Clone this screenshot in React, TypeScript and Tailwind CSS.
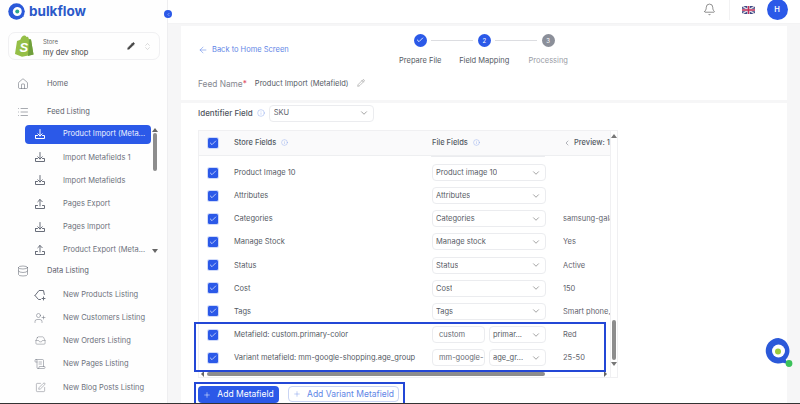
import React from "react";
import { ArrowLeft, Bell, Check, ChevronDown, ChevronLeft, Database, House, Info, List, Pencil, Plus, ScrollText, SquarePen, UserPlus, Inbox, ChevronsUpDown, type LucideIcon } from "lucide-react";

function Logo() {
  return (
    <svg width="17" height="17" viewBox="0 0 34 34">
      <circle cx="17" cy="17" r="16.500" fill="#2b59d9" />
      <path d="M20 8.500a9 9 0 0 1 6 10c-.5 3-2 5-4.500 6.500l11 2.500-3-3 3.500-8-5-9z" fill="#2b59d9" />
      <path d="M19.500 8a9.500 9.500 0 0 0-10 9 9 9 0 0 0 9.500 9c3 0 5-1.500 6.500-3.500 1.500-2 2-4 2-6A9 9 0 0 0 19.500 8z" fill="#fff" />
      <circle cx="18.500" cy="17" r="4" fill="#2aa58c" />
    </svg>
  );
}

function Shopify() {
  return (
    <svg width="20" height="22" viewBox="0 0 20 22">
      <path d="M1 19 3 6c2-.8 3-1 3.500-1.500C7 2.800 8.500.6 10.500.6c.8 0 1.500.6 2 1.400l1.500-.2 1 2.400 2 .3L19.500 19.500 8 21.800z" fill="#95bf47" />
      <path d="M15 4.200l2 .3L19.500 19.500 14 21z" fill="#6f9f3c" />
      <text x="5.500" y="17" fontFamily="'Liberation Sans',sans-serif" fontSize="13" fontWeight="700" fontStyle="italic" fill="#fff">S</text>
    </svg>
  );
}

function TrayArrow({ up = false }: { up?: boolean }) {
  return (
    <svg width="12" height="12" viewBox="0 0 12 12" fill="none" stroke="currentColor" strokeWidth="1" strokeLinecap="round" strokeLinejoin="round">
      <path d="M1.500 7.500v3h9v-3H8.500M3.500 7.500h-2" />
      {up ? <path d="M6 8V1.500M3.800 3.700 6 1.500l2.200 2.200" /> : <path d="M6 1.500V8M3.800 5.800 6 8l2.200-2.200" />}
    </svg>
  );
}

function ProductIcon() {
  return (
    <svg width="12" height="12" viewBox="0 0 12 12" fill="none" stroke="currentColor" strokeWidth="1" strokeLinecap="round" strokeLinejoin="round">
      <path d="M1 6.500 5 1.500h4.500l.8 4M6.500 10.500H4.500L1 6.500" />
      <path d="M9.500 8v3M8 9.500h3" />
    </svg>
  );
}

function Flag() {
  return (
    <svg width="13" height="8" viewBox="0 0 13 8">
      <rect width="13" height="8" fill="#3b4a86" />
      <path d="M0 0 13 8M13 0 0 8" stroke="#e6dfe6" strokeWidth="1.400" />
      <path d="M6.500 0v8M0 4h13" stroke="#e6dfe6" strokeWidth="2.600" />
      <path d="M6.500 0v8M0 4h13" stroke="#c2305a" strokeWidth="1.400" />
    </svg>
  );
}

function SideHead({ Icon, label, h }: { Icon: LucideIcon; label: string; h: string }) {
  return (
    <div className={`flex items-center pl-[17px] shrink-0 ${h}`}>
      <Icon size={12} strokeWidth={1.100} className="text-[#5f6470] w-[12px] shrink-0" />
      <span className="ml-[18px] text-[7.500px] text-[#5c616c]">{label}</span>
    </div>
  );
}

function SubItem({ icon, label, active = false }: { icon: React.ReactNode; label: string; active?: boolean }) {
  return (
    <div className={`flex items-center h-[19px] w-[126px] shrink-0 pl-[9px] rounded-[4px] mb-[4.200px] ${active ? "bg-[#2b59e8] text-white" : "text-[#696e7a]"}`}>
      <span className="w-[12px] shrink-0 flex justify-center">{icon}</span>
      <span className={`ml-[17px] text-[7.500px] whitespace-nowrap ${active ? "text-[#eef2ff]" : "text-[#6d717c]"}`}>{label}</span>
    </div>
  );
}

function Select({ label, cls }: { label: string; cls: string }) {
  return (
    <div className={`h-[17px] rounded-[4px] border border-[#ebecef] bg-white flex items-center justify-between pl-[3px] pr-[4px] shrink-0 overflow-hidden ${cls}`}>
      <span className="text-[7.500px] text-[#585c66] whitespace-nowrap overflow-hidden">{label}</span>
      <ChevronDown size={10} strokeWidth={1.300} className="text-[#555] shrink-0" />
    </div>
  );
}

function Box() {
  return (
    <span className="w-[10px] h-[10px] rounded-[1.500px] bg-[#2b59e8] flex items-center justify-center shrink-0 ring-1 ring-[#cfdafa]">
      <Check size={8} strokeWidth={2} className="text-white" />
    </span>
  );
}

function Row({ name, file, value = "", custom }: { name: string; file?: string; value?: string; custom?: [string, string] }) {
  return (
    <div className="flex items-center h-[23.150px] pl-[9px] whitespace-nowrap">
      <Box />
      <span className="ml-[16px] w-[198px] shrink-0 text-[7.500px] text-[#555a64]">{name}</span>
      {custom ? (
        <div className="flex gap-[4px] w-[114px] shrink-0">
          <div className="h-[17px] w-[53px] rounded-[4px] border border-[#ebecef] flex items-center pl-[6px] overflow-hidden">
            <span className="text-[7.500px] text-[#666a74] whitespace-nowrap">{custom[0]}</span>
          </div>
          <Select label={custom[1]} cls="w-[57px]" />
        </div>
      ) : (
        <Select label={file ?? ""} cls="w-[114px]" />
      )}
      <span className="ml-[17px] w-[47px] overflow-hidden text-[7.500px] text-[#5f636d] whitespace-nowrap">{value}</span>
    </div>
  );
}

function Step({ label, node, cls }: { label: string; node: React.ReactNode; cls: string }) {
  return (
    <div className="flex flex-col items-center w-[64px]">
      {node}
      <span className={`mt-[8px] text-[7.500px] whitespace-nowrap ${cls}`}>{label}</span>
    </div>
  );
}

function Circle({ bg, children }: { bg: string; children: React.ReactNode }) {
  return <span className={`w-[13px] h-[13px] rounded-full flex items-center justify-center text-white text-[6px] ${bg}`}>{children}</span>;
}

export default function App() {
  return (
    <div className="relative w-[800px] h-[404px] overflow-hidden flex border-b border-[#333] bg-[#f6f6f7] font-['Inter',sans-serif]">
      <aside className="w-[168px] shrink-0 bg-[#fefefe] border-r border-[#eeeef0] flex flex-col">
        <div className="flex items-center h-[17px] mt-[3px] pl-[8px] shrink-0">
          <Logo />
          <span className="ml-[4px] text-[13.500px] font-bold text-[#2b59c9] leading-none">bulkflow</span>
        </div>
        <div className="mt-[12px] ml-[8px] w-[152px] h-[28px] rounded-[7px] border border-[#f0f0f2] flex items-center pl-[5px] pr-[7px] shrink-0">
          <Shopify />
          <div className="ml-[9px] flex flex-col leading-[11px] pt-[1px]">
            <span className="text-[6px] text-[#666]">Store</span>
            <span className="text-[7.500px] text-[#444]">my dev shop</span>
          </div>
          <Pencil size={8} strokeWidth={2} fill="#444" className="ml-auto text-[#444]" />
          <ChevronsUpDown size={9} strokeWidth={0.8} className="ml-[8px] text-[#888]" />
        </div>
        <SideHead Icon={House} label="Home" h="h-[22px] mt-[13px]" />
        <SideHead Icon={List} label="Feed Listing" h="h-[22px] mt-[6px]" />
        <div className="flex mt-[1.500px] h-[138.500px] overflow-hidden shrink-0">
          <div className="ml-[25px] w-[126px] shrink-0 flex flex-col">
            <SubItem active icon={<TrayArrow />} label="Product Import (Meta..." />
            <SubItem icon={<TrayArrow />} label="Import Metafields 1" />
            <SubItem icon={<TrayArrow />} label="Import Metafields" />
            <SubItem icon={<TrayArrow up />} label="Pages Export" />
            <SubItem icon={<TrayArrow />} label="Pages Import" />
            <SubItem icon={<TrayArrow up />} label="Product Export (Meta..." />
          </div>
          <div className="w-[8px] flex flex-col items-center">
            <span className="mt-[3px] w-0 h-0 border-x-[3px] border-x-transparent border-b-[4px] border-b-[#666]" />
            <span className="mt-[1px] w-[4px] h-[38px] rounded-[2px] bg-[#8d8d8d]" />
            <span className="mt-[78px] w-0 h-0 border-x-[3px] border-x-transparent border-t-[4px] border-t-[#666]" />
          </div>
        </div>
        <SideHead Icon={Database} label="Data Listing" h="h-[18px] -mt-[1px]" />
        <div className="ml-[25px] mt-[5px] flex flex-col">
          <SubItem icon={<ProductIcon />} label="New Products Listing" />
          <SubItem icon={<UserPlus size={12} strokeWidth={1} />} label="New Customers Listing" />
          <SubItem icon={<Inbox size={11} strokeWidth={1} />} label="New Orders Listing" />
          <SubItem icon={<ScrollText size={12} strokeWidth={1} />} label="New Pages Listing" />
          <SubItem icon={<SquarePen size={11} strokeWidth={1} />} label="New Blog Posts Listing" />
        </div>
      </aside>

      <span className="absolute left-[164px] top-[10px] w-[8px] h-[8px] rounded-full bg-[#2b59e8] flex items-center justify-center">
        <ChevronLeft size={5} strokeWidth={2} className="text-white" />
      </span>

      <main className="flex-1 flex flex-col min-w-0">
        <header className="h-[24px] bg-white flex items-center justify-end shrink-0 pr-[12.500px] pb-[4px] border-b border-[#f3f3f4]">
          <Bell size={13} strokeWidth={1.200} className="text-[#555]" />
          <span className="ml-[13px] w-px h-[20px] bg-[#f2f2f3]" />
          <span className="ml-[12px] flex"><Flag /></span>
          <span className="ml-[12px] w-[21px] h-[21px] rounded-full bg-[#2b59e8] text-white text-[7.500px] font-semibold flex items-center justify-center">H</span>
        </header>

        <div className="ml-[13px] mr-[13px] mt-[2px] h-[74px] bg-white flex flex-col shrink-0">
          <div className="flex h-[46px]">
            <div className="ml-[17px] mt-[18px] flex items-center h-[11px] text-[#5b83e6]">
              <ArrowLeft size={10} strokeWidth={1.300} />
              <span className="ml-[4px] text-[7.500px] text-[#5f86e6]">Back to Home Screen</span>
            </div>
            <div className="ml-[99.500px] mt-[7.500px] flex items-start">
              <Step label="Prepare File" cls="text-[#555a64]" node={<Circle bg="bg-[#2b59e8]"><Check size={8} strokeWidth={2.500} /></Circle>} />
              <div className="w-[42px] -mx-[21px] mt-[6px] h-px bg-[#dcdde1]" />
              <Step label="Field Mapping" cls="text-[#555a64]" node={<Circle bg="bg-[#2b59e8]">2</Circle>} />
              <div className="w-[42px] -mx-[21px] mt-[6px] h-px bg-[#dcdde1]" />
              <Step label="Processing" cls="text-[#9a9da6]" node={<Circle bg="bg-[#8b8f99]">3</Circle>} />
            </div>
          </div>
          <div className="ml-[17px] mt-[4px] flex items-center h-[16px]">
            <span className="text-[8.300px] text-[#85888f]">Feed Name<span className="text-[#e0506a]">*</span></span>
            <span className="ml-[8px] text-[7.500px] text-[#555a64]">Product Import (Metafield)</span>
            <Pencil size={8} strokeWidth={1} className="ml-[8px] -mt-[2px] text-[#444]" />
          </div>
        </div>

        <div className="ml-[13px] mr-[13px] mt-[3px] flex-1 bg-white pl-[17px] min-h-0">
          <div className="flex items-center h-[20px]">
            <span className="text-[8px] font-medium text-[#50545e]">Identifier Field</span>
            <Info size={8} strokeWidth={1} className="ml-[4px] text-[#5f86e6]" />
            <Select label="SKU" cls="ml-[4px] pl-[4px] w-[105px]" />
          </div>

          <div className="mt-[7px] w-[420px] h-[248px] relative border border-[#f0f0f2]">
            <div className="flex items-center h-[24.500px] w-[411px] bg-[#fafafb] border-b border-[#eeeff1] pl-[9px] whitespace-nowrap">
              <Box />
              <span className="ml-[16px] w-[198px] shrink-0 flex items-center text-[7.500px] font-medium text-[#555a64]">
                Store Fields
                <Info size={7} strokeWidth={1} className="ml-[5px] text-[#5f86e6]" />
              </span>
              <span className="w-[114px] shrink-0 flex items-center text-[7.500px] font-medium text-[#555a64]">
                File Fields
                <Info size={7} strokeWidth={1} className="ml-[5px] text-[#5f86e6]" />
              </span>
              <span className="ml-[17px] w-[47px] overflow-hidden flex items-center text-[7.500px] font-medium text-[#555a64]">
                <ChevronLeft size={8} strokeWidth={1.300} className="mr-[3px] shrink-0" />
                Preview: 1
              </span>
            </div>
            <div className="w-[411px]">
              <div className="h-[1.500px] ml-[232px] w-[114px] border-b border-x border-[#ebecef] rounded-b-[4px]" />
              <div className="mt-[4px]">
                <Row name="Product Image 10" file="Product image 10" />
                <Row name="Attributes" file="Attributes" />
                <Row name="Categories" file="Categories" value="samsung-gala" />
                <Row name="Manage Stock" file="Manage stock" value="Yes" />
                <Row name="Status" file="Status" value="Active" />
                <Row name="Cost" file="Cost" value="150" />
                <Row name="Tags" file="Tags" value="Smart phone," />
                <div className="relative">
                  <span className="absolute left-[-5px] top-[-1px] w-[412px] h-[50px] border-2 border-[#2347d6] pointer-events-none z-10" />
                  <Row name="Metafield: custom.primary-color" custom={["custom", "primar..."]} value="Red" />
                  <Row name="Variant metafield: mm-google-shopping.age_group" custom={["mm-google-", "age_gr..."]} value="25-50" />
                </div>
              </div>
              <div className="flex items-center h-[6px] mt-[2px] pl-[2px]">
                <span className="w-0 h-0 border-y-[3px] border-y-transparent border-r-[3px] border-r-[#666]" />
                <span className="ml-[3px] w-[338px] h-[4px] rounded-[2px] bg-[#8d8d8d]" />
                <span className="ml-auto mr-[3px] w-0 h-0 border-y-[3px] border-y-transparent border-l-[3px] border-l-[#666]" />
              </div>
            </div>
            <div className="absolute right-0 top-0 w-[7px] h-full border-l border-[#f0f0f2] flex flex-col items-center bg-white">
              <span className="mt-[3px] w-0 h-0 border-x-[3px] border-x-transparent border-b-[4px] border-b-[#777]" />
              <span className="mt-[182px] w-[4px] h-[40px] rounded-[2px] bg-[#8d8d8d]" />
              <span className="mt-[2px] w-0 h-0 border-x-[3px] border-x-transparent border-t-[4px] border-t-[#777]" />
            </div>
          </div>

          <div className="-ml-[4px] mt-[4px] w-[211px] h-[21px] border-2 border-[#2347d6] border-b-0 flex items-start pl-[2px] pt-[2px]">
            <button className="w-[81px] h-[17px] rounded-[4px] bg-[#2b59e8] text-white text-[8.500px] flex items-center justify-center gap-[6px]">
              <Plus size={8} strokeWidth={1.500} />
              Add Metafield
            </button>
            <button className="ml-[9px] w-[111px] h-[16px] rounded-[4px] border border-[#c9d4f4] text-[#5f86e6] text-[8.500px] flex items-center justify-center gap-[6px] whitespace-nowrap">
              <Plus size={8} strokeWidth={1.200} />
              Add Variant Metafield
            </button>
          </div>
        </div>
      </main>

      <span className="absolute left-[765px] top-[338px] flex">
        <svg width="28" height="30" viewBox="0 0 28 30">
          <path d="M13.500 0a12.800 12.800 0 1 0 4.500 24.800c2 .8 4 1 5.500.5-1.500-1.200-2.300-2.300-2.800-3.700A12.800 12.800 0 0 0 13.500 0z" fill="#2b59d9" />
          <circle cx="13.500" cy="13" r="6.500" fill="#fff" />
          <circle cx="13" cy="13.500" r="3" fill="#9ccc3c" />
          <circle cx="24" cy="25.500" r="3.400" fill="#3bc15a" />
        </svg>
      </span>
    </div>
  );
}
